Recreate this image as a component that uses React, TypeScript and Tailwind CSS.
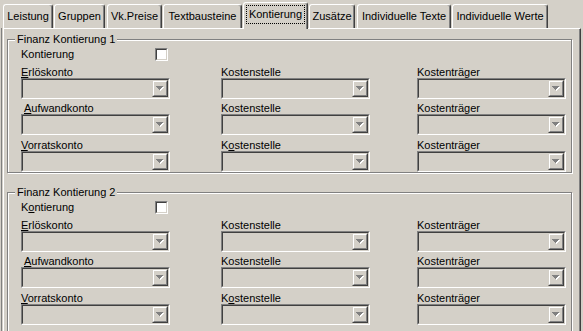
import React from 'react';

function Arrow() {
  return (
    <svg width="8" height="5" viewBox="0 0 8 5" shapeRendering="crispEdges">
      <rect x="1" y="1" width="7" height="1" fill="#ffffff" />
      <rect x="2" y="2" width="5" height="1" fill="#ffffff" />
      <rect x="3" y="3" width="3" height="1" fill="#ffffff" />
      <rect x="4" y="4" width="1" height="1" fill="#ffffff" />
      <rect x="0" y="0" width="7" height="1" fill="#808080" />
      <rect x="1" y="1" width="5" height="1" fill="#808080" />
      <rect x="2" y="2" width="3" height="1" fill="#808080" />
      <rect x="3" y="3" width="1" height="1" fill="#808080" />
    </svg>
  );
}

function Combo() {
  return (
    <div className="w-[149px] h-[21px] border border-t-[#808080] border-l-[#808080] border-r-white border-b-white">
      <div className="h-full flex justify-end bg-[#d4d0c8] border border-t-[#404040] border-l-[#404040] border-r-[#d4d0c8] border-b-[#d4d0c8]">
        <div className="w-[16px] h-full border border-t-[#d4d0c8] border-l-[#d4d0c8] border-r-[#404040] border-b-[#404040]">
          <div className="h-full flex items-center justify-center border border-t-white border-l-white border-r-[#808080] border-b-[#808080]">
            <Arrow />
          </div>
        </div>
      </div>
    </div>
  );
}

function CheckBox() {
  return (
    <div className="w-[13px] h-[13px] border border-t-[#808080] border-l-[#808080] border-r-white border-b-white">
      <div className="h-full bg-white border border-t-[#404040] border-l-[#404040] border-r-[#d4d0c8] border-b-[#d4d0c8]" />
    </div>
  );
}

function U({ children }: { children: React.ReactNode }) {
  return <span className="underline decoration-black decoration-1 underline-offset-[1px]">{children}</span>;
}

type LabelParts = { pre?: string; u?: string; post?: string; indent?: boolean };

function Field({ pre = '', u = '', post = '', indent = false }: LabelParts) {
  return (
    <div className="flex flex-col">
      <div className={'h-[12px] leading-[12px] whitespace-nowrap ' + (indent ? 'pl-[3px]' : '')}>
        {pre}
        {u && <U>{u}</U>}
        {post}
      </div>
      <Combo />
    </div>
  );
}

function Group({ title, underlineKontierung, height }: { title: string; underlineKontierung: boolean; height: string }) {
  return (
    <div className={'relative w-[565px] border border-[#808080] shadow-[inset_1px_1px_0_#ffffff,1px_1px_0_#ffffff] ' + height}>
      <div className="absolute left-[7px] top-[-7px] px-[2px] bg-[#d4d0c8] leading-[13px] whitespace-nowrap">{title}</div>
      <div className="pl-[13px] pt-[8px]">
        <div className="flex items-center h-[13px]">
          <div className="w-[134px] leading-[13px]">
            {underlineKontierung ? (
              <>
                K<U>o</U>ntierung
              </>
            ) : (
              'Kontierung'
            )}
          </div>
          <CheckBox />
        </div>
        <div className="grid grid-cols-[200px_196px_149px] mt-[5px]">
          <Field u="E" post="rlöskonto" />
          <Field pre="Kostenstelle" />
          <Field pre="Kostenträger" />
        </div>
        <div className="grid grid-cols-[200px_196px_149px] mt-[3px]">
          <Field u="A" post="ufwandkonto" indent />
          <Field pre="Kostenstelle" />
          <Field pre="Kostenträger" />
        </div>
        <div className="grid grid-cols-[200px_196px_149px] mt-[4px]">
          <Field u="V" post="orratskonto" />
          <Field pre="K" u="o" post="stenstelle" />
          <Field pre="Kostenträger" />
        </div>
      </div>
    </div>
  );
}

const tabs: { label: string; w: string; mr: string; selected?: boolean }[] = [
  { label: 'Leistung', w: 'w-[50px]', mr: 'mr-[1px]' },
  { label: 'Gruppen', w: 'w-[51px]', mr: 'mr-[2px]' },
  { label: 'Vk.Preise', w: 'w-[55px]', mr: 'mr-[1px]' },
  { label: 'Textbausteine', w: 'w-[79px]', mr: 'mr-[1px]' },
  { label: 'Kontierung', w: 'w-[65px]', mr: 'mr-[1px]', selected: true },
  { label: 'Zusätze', w: 'w-[46px]', mr: 'mr-[2px]' },
  { label: 'Individuelle Texte', w: 'w-[94px]', mr: 'mr-[1px]' },
  { label: 'Individuelle Werte', w: 'w-[96px]', mr: 'mr-0' },
];

export default function App() {
  return (
    <div className="w-[583px] h-[331px] overflow-hidden bg-[#d4d0c8] text-black text-[11px] font-['Liberation_Sans',Arial,sans-serif]">
      <div className="flex items-end h-[28px] pl-[3px]">
        {tabs.map((t) =>
          t.selected ? (
            <div
              key={t.label}
              className={
                'relative z-10 h-[27px] -mb-[1px] bg-[#d4d0c8] flex px-[2px] pt-[2px] pb-[5px] border-l border-t border-r border-l-white border-t-white border-r-[#404040] rounded-t-[3px] shadow-[inset_-1px_0_0_#808080] ' +
                t.w +
                ' ' +
                t.mr
              }
            >
              <div className="flex-1 flex items-center justify-center border border-dotted border-black leading-[13px] whitespace-nowrap">
                {t.label}
              </div>
            </div>
          ) : (
            <div
              key={t.label}
              className={
                'h-[24px] flex items-center justify-center leading-[13px] whitespace-nowrap border-l border-t border-r border-l-white border-t-white border-r-[#404040] rounded-t-[3px] shadow-[inset_-1px_0_0_#808080] ' +
                t.w +
                ' ' +
                t.mr
              }
            >
              {t.label}
            </div>
          )
        )}
      </div>
      <div className="flex">
        <div className="w-[1px] ml-[1px] mr-[1px] h-[310px] bg-[#808080]" />
        <div className="w-[578px] h-[310px] border-t border-l border-r border-t-white border-l-white border-r-[#404040] shadow-[inset_-1px_0_0_#808080] pl-[3px] pt-[10px]">
          <Group title="Finanz Kontierung 1" underlineKontierung={false} height="h-[134px]" />
          <div className="mt-[19px]">
            <Group title="Finanz Kontierung 2" underlineKontierung={true} height="h-[150px]" />
          </div>
        </div>
      </div>
    </div>
  );
}
